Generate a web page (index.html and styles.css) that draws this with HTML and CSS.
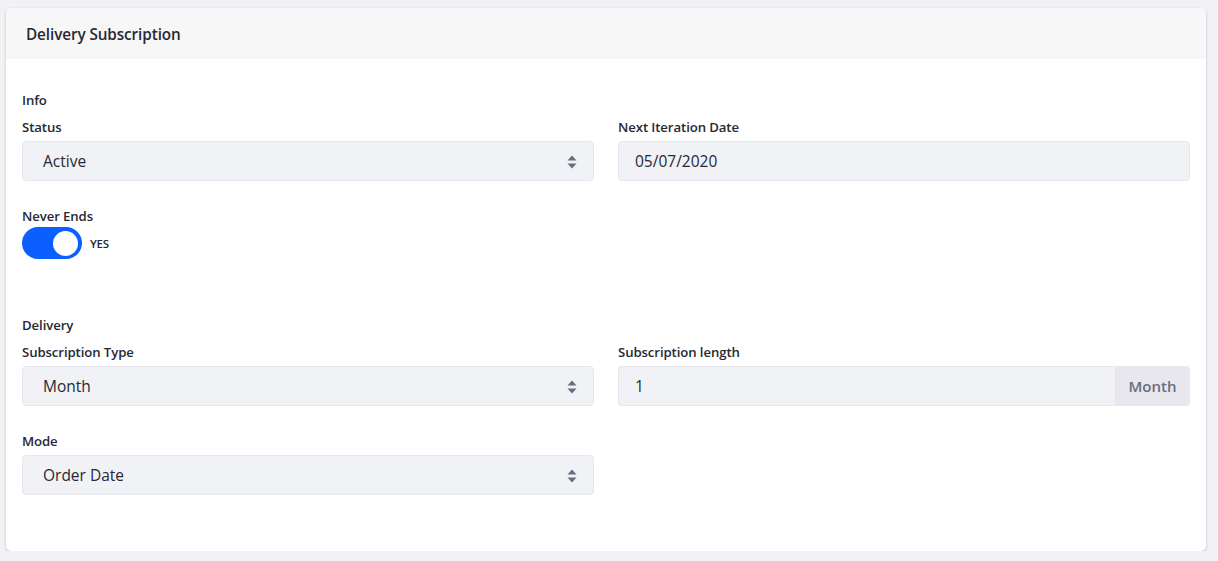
FILE: index.html
```html
<!DOCTYPE html>
<html lang="en">
<head>
<meta charset="utf-8">
<title>Delivery Subscription</title>
<link rel="stylesheet" href="styles.css">
</head>
<body>
<div class="card">
  <div class="card-header">
    <h3 class="card-title">Delivery Subscription</h3>
  </div>
  <div class="card-body">
    <div class="subtitle">Info</div>
    <div class="row">
      <div class="form-group">
        <label class="label">Status</label>
        <div class="select">
          <span>Active</span>
          <svg class="caret" width="10" height="14" viewBox="0 0 10 14"><path d="M5 0.5 L9.5 5.5 H0.5 Z M5 13.5 L9.5 8.5 H0.5 Z" fill="#6b6c7e"/></svg>
        </div>
      </div>
      <div class="form-group">
        <label class="label">Next Iteration Date</label>
        <div class="input"><span>05/07/2020</span></div>
      </div>
    </div>
    <div class="toggle-group">
      <label class="label">Never Ends</label>
      <div class="toggle-row">
        <span class="toggle"><span class="knob"></span></span>
        <span class="toggle-text">YES</span>
      </div>
    </div>
    <div class="subtitle">Delivery</div>
    <div class="row">
      <div class="form-group">
        <label class="label">Subscription Type</label>
        <div class="select">
          <span>Month</span>
          <svg class="caret" width="10" height="14" viewBox="0 0 10 14"><path d="M5 0.5 L9.5 5.5 H0.5 Z M5 13.5 L9.5 8.5 H0.5 Z" fill="#6b6c7e"/></svg>
        </div>
      </div>
      <div class="form-group">
        <label class="label">Subscription length</label>
        <div class="input-group">
          <div class="input grow"><span>1</span></div>
          <div class="append">Month</div>
        </div>
      </div>
    </div>
    <div class="row last">
      <div class="form-group">
        <label class="label">Mode</label>
        <div class="select">
          <span>Order Date</span>
          <svg class="caret" width="10" height="14" viewBox="0 0 10 14"><path d="M5 0.5 L9.5 5.5 H0.5 Z M5 13.5 L9.5 8.5 H0.5 Z" fill="#6b6c7e"/></svg>
        </div>
      </div>
    </div>
  </div>
</div>
</body>
</html>
```

FILE: styles.css
```css
* { box-sizing: border-box; }
html, body { margin: 0; }
body {
  background: #f1f2f5;
  padding: 8px 12px 0 6px;
  font-family: "Open Sans", "Noto Sans", sans-serif;
  color: #272833;
}
.card {
  width: 1200px;
  height: 543px;
  background: #fff;
  border-radius: 5px;
  box-shadow: 0 1px 3px rgba(0,0,0,0.22);
  overflow: hidden;
}
.card-header {
  height: 51px;
  background: #f7f7f8;
  display: flex;
  align-items: center;
  padding: 0 20px;
}
.card-title {
  margin: 0;
  font-size: 15.3px;
  font-weight: 600;
  letter-spacing: -0.1px;
  color: #272833;
}
.card-body {
  padding: 30px 16px 56px;
}
.subtitle, .label {
  display: block;
  font-size: 13.2px;
  font-weight: 600;
  line-height: 20px;
  padding-top: 1px;
  letter-spacing: -0.1px;
}
.subtitle { margin-bottom: 6px; }
.label { margin-bottom: 4px; }
.row {
  display: grid;
  grid-template-columns: 572px 572px;
  column-gap: 24px;
  margin-bottom: 24px;
}
.row.last { margin-bottom: 0; }
.select, .input {
  height: 40px;
  background: #f1f2f5;
  border: 1px solid #e7e7ed;
  border-radius: 4px;
  display: flex;
  align-items: center;
  padding: 0 16px 0 20px;
  font-size: 15.5px;
  color: #272833;
}
.input { padding-left: 16px; }
.select { justify-content: space-between; }
.caret { display: block; margin-top: 1px; }
.toggle-group { margin-bottom: 55px; }
.toggle-group .label { margin-bottom: 1px; }
.toggle-row { display: flex; align-items: center; gap: 8px; height: 32px; }
.toggle {
  width: 60px;
  height: 32px;
  border-radius: 16px;
  background: #0b5fff;
  display: flex;
  align-items: center;
  justify-content: flex-end;
  padding-right: 4px;
}
.knob {
  width: 25px;
  height: 25px;
  border-radius: 50%;
  background: #fff;
}
.toggle-text {
  font-size: 11.5px;
  font-weight: 600;
  letter-spacing: -0.2px;
}
.input-group { display: flex; height: 40px; }
.input-group .grow {
  flex: 1;
  border-radius: 4px 0 0 4px;
  border-right: 0;
  padding-left: 16px;
}
.append {
  width: 75px;
  background: #e7e7ed;
  border-radius: 0 4px 4px 0;
  display: flex;
  align-items: center;
  justify-content: center;
  font-size: 15px;
  font-weight: 600;
  color: #6b6c7e;
}
```
